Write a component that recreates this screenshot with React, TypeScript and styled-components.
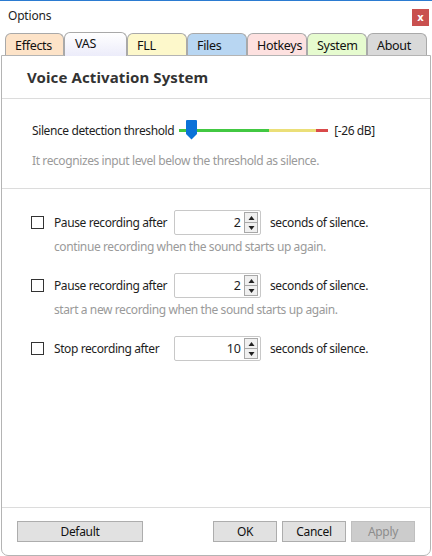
import React from "react";
import styled, { createGlobalStyle } from "styled-components";

const Global = createGlobalStyle`
  html, body { margin: 0; padding: 0; background: #fff; }
  body { font-family: "Noto Sans", "Open Sans", sans-serif; font-size: 12px; color: #1e1e1e; }
  * { box-sizing: border-box; }
`;

const Window = styled.div`
  width: 432px;
  height: 556px;
  border-top: 1px solid #2b7bd1;
  background: #fff;
  display: flex;
  flex-direction: column;
`;

const TitleBar = styled.div`
  height: 30px;
  display: flex;
  align-items: center;
  justify-content: space-between;
  padding: 0 3px 0 8px;
`;

const Title = styled.span`
  font-size: 12px;
  letter-spacing: -0.2px;
  margin-top: -1px;
`;

const CloseBtn = styled.button`
  width: 17px;
  height: 17px;
  border: none;
  background: #c9504f;
  color: #fff;
  font: bold 10px "DejaVu Sans", sans-serif;
  padding: 0;
  display: flex;
  align-items: center;
  justify-content: center;
  margin-top: 2px;
`;

const TabStrip = styled.div`
  height: 24px;
  display: flex;
  align-items: flex-end;
  padding-left: 5px;
  position: relative;
  z-index: 1;
`;

const Tab = styled.div<{ $bg: string; $w: number; $active?: boolean }>`
  width: ${(p) => p.$w}px;
  height: ${(p) => (p.$active ? 24 : 22)}px;
  margin-bottom: ${(p) => (p.$active ? -1 : 0)}px;
  background: ${(p) => p.$bg};
  border: 1px solid #a9a9a9;
  border-bottom: none;
  border-radius: 6px 6px 0 0;
  padding-left: ${(p) => (p.$active ? 10 : 9)}px;
  display: flex;
  align-items: ${(p) => (p.$active ? "flex-start" : "center")};
  padding-top: ${(p) => (p.$active ? 2 : 1)}px;
  font-size: 12.5px;
  letter-spacing: -0.3px;
  color: #111;
`;

const Panel = styled.div`
  flex: 1;
  margin: 0 1px 0 1px;
  border: 1px solid #b4b4b4;
  border-radius: 0 0 7px 7px;
  display: flex;
  flex-direction: column;
  background: #fff;
`;

const Header = styled.div`
  height: 43px;
  border-bottom: 1px solid #dcdcdc;
  padding-left: 25px;
  display: flex;
  align-items: center;
  font-weight: bold;
  font-size: 15px;
  color: #333;
  letter-spacing: 0.1px;
`;

const Section = styled.div<{ $pad: string; $border?: boolean }>`
  padding: ${(p) => p.$pad};
  border-bottom: ${(p) => (p.$border ? "1px solid #dcdcdc" : "none")};
  display: flex;
  flex-direction: column;
`;

const Line = styled.div`
  display: flex;
  align-items: center;
  height: 20px;
  letter-spacing: -0.4px;
`;

const Hint = styled.div<{ $indent?: number; $top?: number; $h?: number; $bottom?: number }>`
  color: #9a9a9a;
  padding-left: ${(p) => p.$indent ?? 0}px;
  margin-top: ${(p) => p.$top ?? 0}px;
  margin-bottom: ${(p) => p.$bottom ?? 0}px;
  letter-spacing: -0.4px;
  height: ${(p) => p.$h ?? 18}px;
  display: flex;
  align-items: center;
`;

const SliderWrap = styled.div`
  position: relative;
  width: 149px;
  height: 20px;
  margin-left: 5px;
  display: flex;
  align-items: center;
`;

const Track = styled.div`
  display: flex;
  width: 100%;
  height: 3px;
`;

const Seg = styled.div<{ $c: string; $w: number }>`
  width: ${(p) => p.$w}px;
  height: 3px;
  background: ${(p) => p.$c};
`;

const Thumb = styled.svg`
  position: absolute;
  left: 7px;
  top: 0px;
`;

const DbLabel = styled.span`
  margin-left: 6px;
`;

const OptionRow = styled.div`
  display: flex;
  align-items: center;
  height: 25px;
`;

const Check = styled.span`
  width: 13px;
  height: 13px;
  border: 1px solid #333;
  background: #fff;
  margin-right: 10px;
  flex-shrink: 0;
`;

const OptLabel = styled.span`
  width: 120px;
  letter-spacing: -0.4px;
`;

const Spin = styled.div`
  width: 87px;
  height: 25px;
  border: 1px solid #c8c8c8;
  border-radius: 2px;
  display: flex;
  align-items: center;
  justify-content: flex-end;
  padding-right: 2px;
  gap: 3px;
  margin-right: 9px;
`;

const SpinValue = styled.span`
  font-size: 12.5px;
`;

const SpinButtons = styled.div`
  display: flex;
  flex-direction: column;
  width: 14px;
  height: 21px;
`;

const SpinBtn = styled.div`
  flex: 1;
  border: 1px solid #a8a8a8;
  background: #f0f0f0;
  display: flex;
  align-items: center;
  justify-content: center;
  & + & { border-top: none; }
`;

const Suffix = styled.span`
  letter-spacing: -0.4px;
`;

const Spacer = styled.div`
  flex: 1;
`;

const Footer = styled.div`
  border-top: 1px solid #dcdcdc;
  height: 48px;
  display: flex;
  align-items: flex-start;
  padding: 13px 15px 0 15px;
  gap: 5px;
`;

const Button = styled.button<{ $w: number; $disabled?: boolean }>`
  width: ${(p) => p.$w}px;
  height: 21px;
  background: ${(p) => (p.$disabled ? "#cccccc" : "#e1e1e1")};
  border: 1px solid ${(p) => (p.$disabled ? "#bfbfbf" : "#adadad")};
  color: ${(p) => (p.$disabled ? "#8d8d8d" : "#111")};
  font-family: "Noto Sans", "Open Sans", sans-serif;
  font-size: 12px;
  letter-spacing: -0.3px;
  padding: 0;
`;

const Tri = ({ up }: { up?: boolean }) => (
  <svg width="7" height="4" viewBox="0 0 7 4">
    <polygon points={up ? "0.5,4 6.5,4 3.5,0" : "0.5,0 6.5,0 3.5,4"} fill="#222" />
  </svg>
);

const SpinBox = ({ value }: { value: number }) => (
  <Spin>
    <SpinValue>{value}</SpinValue>
    <SpinButtons>
      <SpinBtn><Tri up /></SpinBtn>
      <SpinBtn><Tri /></SpinBtn>
    </SpinButtons>
  </Spin>
);

const tabs = [
  { label: "Effects", bg: "#fde3c8", w: 59 },
  { label: "VAS", bg: "linear-gradient(#ffffff, #ececfa)", w: 63, active: true },
  { label: "FLL", bg: "#fdf8cb", w: 60 },
  { label: "Files", bg: "#b8d6f2", w: 60 },
  { label: "Hotkeys", bg: "#fde1e0", w: 60 },
  { label: "System", bg: "#e6fbcf", w: 60 },
  { label: "About", bg: "#d9d9d9", w: 60 },
];

const options = [
  { label: "Pause recording after", value: 2, hint: "continue recording when the sound starts up again." },
  { label: "Pause recording after", value: 2, hint: "start a new recording when the sound starts up again." },
  { label: "Stop recording after", value: 10, hint: "" },
];

export default function App() {
  return (
    <>
      <Global />
      <Window>
        <TitleBar>
          <Title>Options</Title>
          <CloseBtn>x</CloseBtn>
        </TitleBar>
        <TabStrip>
          {tabs.map((t) => (
            <Tab key={t.label} $bg={t.bg} $w={t.w} $active={t.active}>
              {t.label}
            </Tab>
          ))}
        </TabStrip>
        <Panel>
          <Header>Voice Activation System</Header>
          <Section $pad="21px 0 19px 30px" $border>
            <Line>
              <span>Silence detection threshold</span>
              <SliderWrap>
                <Track>
                  <Seg $c="#42c842" $w={90} />
                  <Seg $c="#ebdf78" $w={47} />
                  <Seg $c="#d94a4a" $w={12} />
                </Track>
                <Thumb width="11" height="20" viewBox="0 0 11 20">
                  <path d="M1 0 H10 Q11 0 11 1 V14 L5.5 19.5 L0 14 V1 Q0 0 1 0 Z" fill="#0a72d8" />
                </Thumb>
              </SliderWrap>
              <DbLabel>[-26 dB]</DbLabel>
            </Line>
            <Hint $top={11}>It recognizes input level below the threshold as silence.</Hint>
          </Section>
          <Section $pad="21px 0 0 29px">
            {options.map((o, i) => (
              <React.Fragment key={i}>
                <OptionRow>
                  <Check />
                  <OptLabel>{o.label}</OptLabel>
                  <SpinBox value={o.value} />
                  <Suffix>seconds of silence.</Suffix>
                </OptionRow>
                {o.hint && (
                  <Hint $indent={23} $h={23} $bottom={15}>
                    {o.hint}
                  </Hint>
                )}
              </React.Fragment>
            ))}
          </Section>
          <Spacer />
          <Footer>
            <Button $w={126}>Default</Button>
            <Spacer />
            <Button $w={64}>OK</Button>
            <Button $w={64}>Cancel</Button>
            <Button $w={64} $disabled>Apply</Button>
          </Footer>
        </Panel>
      </Window>
    </>
  );
}
